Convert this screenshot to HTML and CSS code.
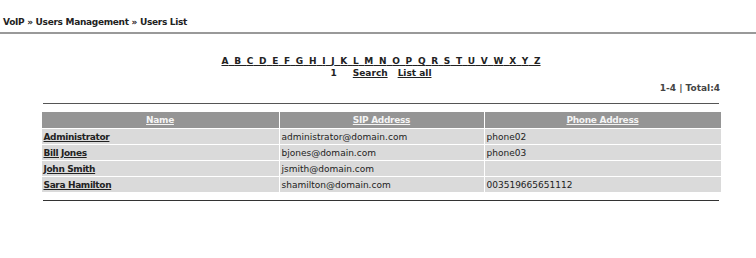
FILE: index.html
```html
<!DOCTYPE html>
<html>
<head>
<meta charset="utf-8">
<title>Users List</title>
<link rel="stylesheet" href="styles.css">
</head>
<body>
<div class="crumb">VoIP &raquo; Users Management &raquo; Users List</div>
<div class="main">
  <div class="alpha"><a href="#">A</a> <a href="#">B</a> <a href="#">C</a> <a href="#">D</a> <a href="#">E</a> <a href="#">F</a> <a href="#">G</a> <a href="#">H</a> <a href="#">I</a> <a href="#">J</a> <a href="#">K</a> <a href="#">L</a> <a href="#">M</a> <a href="#">N</a> <a href="#">O</a> <a href="#">P</a> <a href="#">Q</a> <a href="#">R</a> <a href="#">S</a> <a href="#">T</a> <a href="#">U</a> <a href="#">V</a> <a href="#">W</a> <a href="#">X</a> <a href="#">Y</a> <a href="#">Z</a></div>
  <div class="pager"><span class="page">1</span><a href="#">Search</a><a href="#">List all</a></div>
  <div class="total">1-4 | Total:4</div>
  <div class="rule"></div>
  <table class="list">
    <thead>
      <tr><th class="c1"><a href="#">Name</a></th><th class="c2"><a href="#">SIP Address</a></th><th class="c3"><a href="#">Phone Address</a></th></tr>
    </thead>
    <tbody>
      <tr><td><a href="#">Administrator</a></td><td>administrator@domain.com</td><td>phone02</td></tr>
      <tr><td><a href="#">Bill Jones</a></td><td>bjones@domain.com</td><td>phone03</td></tr>
      <tr><td><a href="#">John Smith</a></td><td>jsmith@domain.com</td><td></td></tr>
      <tr><td><a href="#">Sara Hamilton</a></td><td>shamilton@domain.com</td><td>003519665651112</td></tr>
    </tbody>
  </table>
  <div class="rule bottom"></div>
</div>
</body>
</html>
```
FILE: styles.css
```css
html, body {
  margin: 0;
  padding: 0;
  background: #fff;
}
body {
  font-family: "DejaVu Sans", Verdana, sans-serif;
  color: #222;
}
a {
  color: #222;
}
.crumb {
  font-size: 9px;
  font-weight: bold;
  letter-spacing: -0.3px;
  line-height: 14px;
  padding: 15px 0 0 3px;
  height: 17px;
  border-bottom: 2px solid #999;
  color: #222;
}
.main {
  padding-left: 6px;
  display: flex;
  flex-direction: column;
  align-items: center;
}
.alpha {
  margin-top: 21px;
  font-size: 9px;
  font-weight: bold;
  line-height: 12px;
  text-decoration: underline;
  word-spacing: 2.55px;
}
.alpha a {
  text-decoration: none;
}
.pager {
  font-size: 9px;
  font-weight: bold;
  line-height: 12px;
  display: flex;
  gap: 10px;
}
.pager .page {
  margin-right: 6px;
}
.total {
  align-self: stretch;
  text-align: right;
  font-size: 9px;
  font-weight: bold;
  line-height: 12px;
  margin-top: 3px;
  padding-right: 36px;
  color: #444;
}
.rule {
  width: 676px;
  border-top: 1px solid #555;
  margin-top: 9px;
}
.list {
  width: 681px;
  margin-top: 7px;
  border-collapse: separate;
  border-spacing: 1px;
  font-size: 9px;
}
.list th {
  background: #959595;
  color: #f0f0f0;
  height: 16px;
  padding: 0;
  font-weight: bold;
  letter-spacing: -0.3px;
  text-align: center;
}
.list th a {
  color: #f4f4f4;
}
.list .c1 { width: 237px; }
.list .c2 { width: 204px; }
.list td {
  background: #dadada;
  height: 15px;
  padding: 0 2px;
  text-align: left;
}
.list td a {
  font-weight: bold;
  letter-spacing: -0.35px;
}
.rule.bottom {
  margin-top: 7px;
  border-top-color: #333;
}
```
